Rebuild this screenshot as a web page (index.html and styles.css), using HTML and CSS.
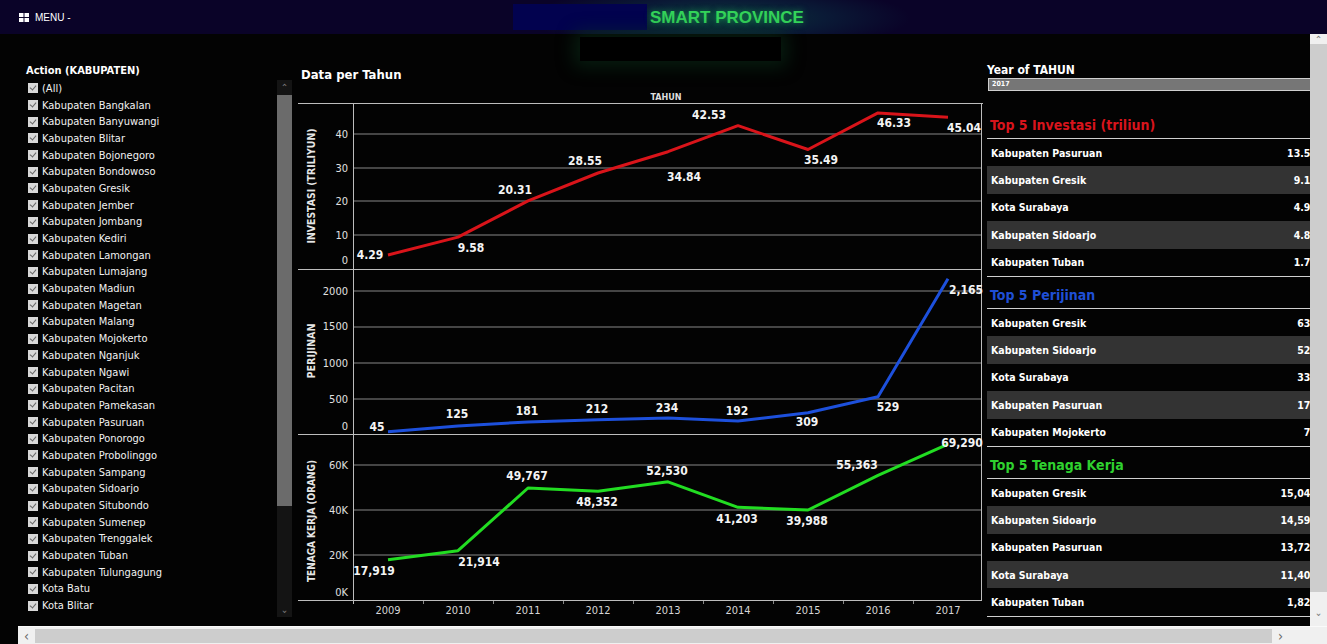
FILE: index.html
```html
<!DOCTYPE html>
<html lang="id">
<head>
  <meta charset="UTF-8">
  <title>Smart Province - Data per Tahun</title>
  <link rel="stylesheet" href="styles.css">
</head>
<body>

  <header class="topbar">
    <div class="menu">
      <svg class="menu-icon" width="10" height="9" viewBox="0 0 10 9">
        <rect x="0" y="0" width="4.5" height="4" fill="#fff"/>
        <rect x="5.5" y="0" width="4.5" height="4" fill="#fff"/>
        <rect x="0" y="5" width="4.5" height="4" fill="#fff"/>
        <rect x="5.5" y="5" width="4.5" height="4" fill="#fff"/>
      </svg>
      <span>MENU -</span>
    </div>
    <div class="brand">
      <span class="brand-logo"></span>
      <span class="brand-name">SMART PROVINCE</span>
    </div>
    <div class="subtitle-box"></div>
  </header>

  <div class="viewport">
    <div class="page">

      <!-- filter kabupaten -->
      <aside class="filter">
        <div class="filter-title">Action (KABUPATEN)</div>
        <div class="filter-box">
          <ul class="filter-list">
            <li><i class="cb"></i>(All)</li>
            <li><i class="cb"></i>Kabupaten Bangkalan</li>
            <li><i class="cb"></i>Kabupaten Banyuwangi</li>
            <li><i class="cb"></i>Kabupaten Blitar</li>
            <li><i class="cb"></i>Kabupaten Bojonegoro</li>
            <li><i class="cb"></i>Kabupaten Bondowoso</li>
            <li><i class="cb"></i>Kabupaten Gresik</li>
            <li><i class="cb"></i>Kabupaten Jember</li>
            <li><i class="cb"></i>Kabupaten Jombang</li>
            <li><i class="cb"></i>Kabupaten Kediri</li>
            <li><i class="cb"></i>Kabupaten Lamongan</li>
            <li><i class="cb"></i>Kabupaten Lumajang</li>
            <li><i class="cb"></i>Kabupaten Madiun</li>
            <li><i class="cb"></i>Kabupaten Magetan</li>
            <li><i class="cb"></i>Kabupaten Malang</li>
            <li><i class="cb"></i>Kabupaten Mojokerto</li>
            <li><i class="cb"></i>Kabupaten Nganjuk</li>
            <li><i class="cb"></i>Kabupaten Ngawi</li>
            <li><i class="cb"></i>Kabupaten Pacitan</li>
            <li><i class="cb"></i>Kabupaten Pamekasan</li>
            <li><i class="cb"></i>Kabupaten Pasuruan</li>
            <li><i class="cb"></i>Kabupaten Ponorogo</li>
            <li><i class="cb"></i>Kabupaten Probolinggo</li>
            <li><i class="cb"></i>Kabupaten Sampang</li>
            <li><i class="cb"></i>Kabupaten Sidoarjo</li>
            <li><i class="cb"></i>Kabupaten Situbondo</li>
            <li><i class="cb"></i>Kabupaten Sumenep</li>
            <li><i class="cb"></i>Kabupaten Trenggalek</li>
            <li><i class="cb"></i>Kabupaten Tuban</li>
            <li><i class="cb"></i>Kabupaten Tulungagung</li>
            <li><i class="cb"></i>Kota Batu</li>
            <li><i class="cb"></i>Kota Blitar</li>
            <li><i class="cb"></i>Kota Kediri</li>
          </ul>
          <div class="list-scroll">
            <span class="arr">&#8963;</span>
            <span class="list-thumb"></span>
            <span class="arr down">&#8964;</span>
          </div>
        </div>
      </aside>

      <!-- grafik per tahun -->
      <section class="chart-col">
        <div class="chart-title">Data per Tahun</div>
        <svg class="chart" viewBox="296 83 689 539" width="689" height="539">
          <text x="666" y="100" class="head">TAHUN</text>

          <!-- grid -->
          <g class="grid">
            <line x1="353" y1="134" x2="982" y2="134"/>
            <line x1="353" y1="168" x2="982" y2="168"/>
            <line x1="353" y1="201" x2="982" y2="201"/>
            <line x1="353" y1="235" x2="982" y2="235"/>
            <line x1="353" y1="291" x2="982" y2="291"/>
            <line x1="353" y1="327" x2="982" y2="327"/>
            <line x1="353" y1="363" x2="982" y2="363"/>
            <line x1="353" y1="399" x2="982" y2="399"/>
            <line x1="353" y1="465" x2="982" y2="465"/>
            <line x1="353" y1="510" x2="982" y2="510"/>
            <line x1="353" y1="555" x2="982" y2="555"/>
          </g>

          <!-- frame -->
          <g class="frame">
            <line x1="298" y1="103.5" x2="983" y2="103.5"/>
            <line x1="298" y1="269.5" x2="982" y2="269.5"/>
            <line x1="298" y1="434.5" x2="982" y2="434.5"/>
            <line x1="298" y1="600.5" x2="982" y2="600.5"/>
            <line x1="353.5" y1="103" x2="353.5" y2="604"/>
            <line x1="981.5" y1="103" x2="981.5" y2="601"/>
          </g>
          <g class="xtick">
            <line x1="423.5" y1="601" x2="423.5" y2="604"/>
            <line x1="493.5" y1="601" x2="493.5" y2="604"/>
            <line x1="563.5" y1="601" x2="563.5" y2="604"/>
            <line x1="633.5" y1="601" x2="633.5" y2="604"/>
            <line x1="703.5" y1="601" x2="703.5" y2="604"/>
            <line x1="773.5" y1="601" x2="773.5" y2="604"/>
            <line x1="843.5" y1="601" x2="843.5" y2="604"/>
            <line x1="913.5" y1="601" x2="913.5" y2="604"/>
          </g>

          <!-- axis titles -->
          <g class="ytitle">
            <text transform="translate(315,186) rotate(-90)" textLength="115" lengthAdjust="spacingAndGlyphs">INVESTASI (TRILIYUN)</text>
            <text transform="translate(315,351) rotate(-90)" textLength="55" lengthAdjust="spacingAndGlyphs">PERIJINAN</text>
            <text transform="translate(315,521) rotate(-90)" textLength="122" lengthAdjust="spacingAndGlyphs">TENAGA KERJA (ORANG)</text>
          </g>

          <!-- y ticks -->
          <g class="ytick">
            <text x="348" y="138">40</text>
            <text x="348" y="172">30</text>
            <text x="348" y="205">20</text>
            <text x="348" y="239">10</text>
            <text x="348" y="264">0</text>
            <text x="348" y="295">2000</text>
            <text x="348" y="330">1500</text>
            <text x="348" y="367">1000</text>
            <text x="348" y="403">500</text>
            <text x="348" y="430">0</text>
            <text x="348" y="469">60K</text>
            <text x="348" y="514">40K</text>
            <text x="348" y="559">20K</text>
            <text x="348" y="596">0K</text>
          </g>

          <!-- x labels -->
          <g class="xlabel">
            <text x="388" y="614">2009</text>
            <text x="458" y="614">2010</text>
            <text x="528" y="614">2011</text>
            <text x="598" y="614">2012</text>
            <text x="668" y="614">2013</text>
            <text x="738" y="614">2014</text>
            <text x="808" y="614">2015</text>
            <text x="878" y="614">2016</text>
            <text x="948" y="614">2017</text>
          </g>

          <!-- series -->
          <polyline class="line red" points="388,255 458,237.1 528,200.9 598,173 668,151.7 738,125.7 808,149.5 878,112.9 948,117.3"/>
          <polyline class="line blue" points="388,431.8 458,426 528,421.9 598,419.7 668,418.1 738,421.1 808,412.7 878,396.8 948,278.7"/>
          <polyline class="line green" points="388,559.7 458,550.7 528,488 598,491.2 668,481.8 738,507.3 808,510 878,475.4 948,444.1"/>

          <g class="val">
            <text x="370" y="259">4.29</text>
            <text x="471" y="252">9.58</text>
            <text x="515" y="194">20.31</text>
            <text x="585" y="165">28.55</text>
            <text x="684" y="181">34.84</text>
            <text x="709" y="119">42.53</text>
            <text x="821" y="164">35.49</text>
            <text x="894" y="127">46.33</text>
            <text x="964" y="132">45.04</text>

            <text x="377" y="431">45</text>
            <text x="457" y="418">125</text>
            <text x="527" y="415">181</text>
            <text x="597" y="413">212</text>
            <text x="667" y="412">234</text>
            <text x="737" y="415">192</text>
            <text x="807" y="426">309</text>
            <text x="888" y="411">529</text>
            <text x="966" y="294">2,165</text>

            <text x="374" y="575">17,919</text>
            <text x="479" y="566">21,914</text>
            <text x="527" y="480">49,767</text>
            <text x="597" y="506">48,352</text>
            <text x="667" y="475">52,530</text>
            <text x="737" y="523">41,203</text>
            <text x="807" y="525">39,988</text>
            <text x="857" y="469">55,363</text>
            <text x="962" y="447">69,290</text>
          </g>
        </svg>
      </section>

      <!-- top 5 tables -->
      <aside class="tops">
        <div class="year-title">Year of TAHUN</div>
        <div class="year-select">2017</div>

        <div class="sect first">
          <div class="sect-title red">Top 5 Investasi (triliun)</div>
          <div class="row"><span>Kabupaten Pasuruan</span><b>13.55</b></div>
          <div class="row alt"><span>Kabupaten Gresik</span><b>9.15</b></div>
          <div class="row"><span>Kota Surabaya</span><b>4.95</b></div>
          <div class="row alt"><span>Kabupaten Sidoarjo</span><b>4.85</b></div>
          <div class="row"><span>Kabupaten Tuban</span><b>1.75</b></div>
        </div>

        <div class="sect">
          <div class="sect-title blue">Top 5 Perijinan</div>
          <div class="row"><span>Kabupaten Gresik</span><b>638</b></div>
          <div class="row alt"><span>Kabupaten Sidoarjo</span><b>527</b></div>
          <div class="row"><span>Kota Surabaya</span><b>335</b></div>
          <div class="row alt"><span>Kabupaten Pasuruan</span><b>178</b></div>
          <div class="row"><span>Kabupaten Mojokerto</span><b>78</b></div>
        </div>

        <div class="sect">
          <div class="sect-title green">Top 5 Tenaga Kerja</div>
          <div class="row"><span>Kabupaten Gresik</span><b>15,043</b></div>
          <div class="row alt"><span>Kabupaten Sidoarjo</span><b>14,596</b></div>
          <div class="row"><span>Kabupaten Pasuruan</span><b>13,724</b></div>
          <div class="row alt"><span>Kota Surabaya</span><b>11,402</b></div>
          <div class="row"><span>Kabupaten Tuban</span><b>1,825</b></div>
        </div>
      </aside>
    </div>

    <div class="vscroll">
      <span class="arr">&#8963;</span>
      <span class="vthumb"></span>
      <span class="arr">&#8964;</span>
    </div>
  </div>

  <div class="hscroll">
    <span class="arr">&lsaquo;</span>
    <span class="hthumb"></span>
    <span class="arr">&rsaquo;</span>
    <span class="corner"></span>
  </div>

</body>
</html>
```

FILE: styles.css
```css
* {
  box-sizing: border-box;
}
body {
  margin: 0;
  background: #030303;
  color: #eee;
  font-family: 'DejaVu Sans Condensed', 'DejaVu Sans', sans-serif;
  width: 1327px;
  height: 644px;
  overflow: hidden;
}

/* Header */
.topbar {
  position: relative;
  height: 34px;
  display: flex;
  align-items: center;
  background: radial-gradient(ellipse 190px 34px at 720px 18px, #0b3b3c 0%, #0a1a36 55%, #0a0328 100%);
  background-color: #0a0328;
}
.menu {
  width: 513px;
  padding-left: 19px;
  display: flex;
  align-items: center;
  gap: 6px;
  font-family: 'Liberation Sans', Arial, sans-serif;
  font-size: 10px;
  color: #fff;
}
.brand {
  display: flex;
  align-items: center;
  height: 34px;
}
.brand-logo {
  width: 134px;
  height: 26px;
  background: #02024f;
}
.brand-name {
  margin: 2px 0 0 3px;
  font-family: 'Liberation Sans', Arial, sans-serif;
  font-weight: bold;
  font-size: 17px;
  color: #34d45a;
  text-shadow: 0 0 6px rgba(40, 220, 100, 0.55);
}
.subtitle-box {
  position: absolute;
  left: 580px;
  top: 37px;
  width: 201px;
  height: 24px;
  background: #000;
  box-shadow: 0 0 18px 6px rgba(10, 60, 30, 0.45);
  z-index: 2;
}

/* Layout */
.viewport {
  display: flex;
  height: 592px;
}
.page {
  display: flex;
  width: 1310px;
  overflow: hidden;
}

/* Filter panel */
.filter {
  width: 296px;
  flex: none;
  padding-left: 26px;
}
.filter-title {
  margin-top: 30px;
  height: 14px;
  line-height: 14px;
  font-size: 11px;
  font-weight: bold;
  color: #fff;
}
.filter-box {
  display: flex;
  margin-top: 2px;
  height: 537px;
  overflow: hidden;
}
.filter-list {
  list-style: none;
  margin: 0;
  padding: 0 0 0 2px;
  width: 251px;
}
.filter-list li {
  height: 16.7px;
  display: flex;
  align-items: center;
  font-size: 11px;
  color: #f2f2f2;
  white-space: nowrap;
}
.cb {
  width: 10px;
  height: 10px;
  margin-right: 4px;
  flex: none;
  background: #d8d8d8;
  position: relative;
}
.cb::after {
  content: "";
  position: absolute;
  left: 3px;
  top: 1px;
  width: 3px;
  height: 5px;
  border: solid #666;
  border-width: 0 1.5px 1.5px 0;
  transform: rotate(40deg);
}
.list-scroll {
  width: 15px;
  flex: none;
  display: flex;
  flex-direction: column;
  align-items: center;
  background: #141414;
  color: #777;
  font-size: 10px;
}
.list-scroll .arr {
  height: 15px;
  line-height: 15px;
}
.list-thumb {
  width: 15px;
  height: 411px;
  background: #6b6b6b;
}
.list-scroll .down {
  margin-top: auto;
}

/* Chart column */
.chart-col {
  width: 689px;
  flex: none;
}
.chart-title {
  margin: 33px 0 0 5px;
  height: 16px;
  line-height: 16px;
  font-size: 13px;
  font-weight: bold;
  color: #fff;
}
.chart {
  display: block;
  font-family: 'DejaVu Sans Condensed', 'DejaVu Sans', sans-serif;
}
.chart .head {
  font-size: 9px;
  font-weight: bold;
  fill: #ddd;
  text-anchor: middle;
}
.chart .grid line {
  stroke: #5c5c5c;
  stroke-width: 1.5;
}
.chart .frame line {
  stroke: #bdbdbd;
  stroke-width: 1;
}
.chart .xtick line {
  stroke: #888;
}
.chart .ytitle text {
  font-size: 10px;
  font-weight: bold;
  fill: #e6e6e6;
  text-anchor: middle;
}
.chart .ytick text {
  font-size: 11px;
  fill: #e0e0e0;
  text-anchor: end;
}
.chart .xlabel text {
  font-size: 11px;
  fill: #d6d6d6;
  text-anchor: middle;
}
.chart .line {
  fill: none;
  stroke-width: 3;
  stroke-linejoin: round;
}
.chart .red { stroke: #d9141a; }
.chart .blue { stroke: #1d50dc; }
.chart .green { stroke: #22dd22; }
.chart .val text {
  font-size: 12px;
  font-weight: bold;
  fill: #f4f4f4;
  text-anchor: middle;
}

/* Top 5 panel */
.tops {
  width: 325px;
  flex: none;
  padding-left: 2px;
  overflow: hidden;
}
.year-title {
  margin-top: 29px;
  height: 14px;
  line-height: 14px;
  font-size: 12px;
  font-weight: bold;
  color: #fff;
}
.year-select {
  margin: 1px 0 0 1px;
  width: 340px;
  height: 13px;
  line-height: 11px;
  padding-left: 3px;
  background: #767676;
  border: 1px solid #cfcfcf;
  font-size: 7px;
  font-weight: bold;
  color: #fff;
}
.sect {
  width: 331px;
  border-bottom: 1px solid #cfcfcf;
}
.sect.first {
  margin-top: 16px;
}
.sect-title {
  height: 32px;
  border-bottom: 1px solid #cfcfcf;
  display: flex;
  align-items: flex-end;
  padding: 0 0 5px 3px;
  font-size: 14px;
  font-weight: bold;
}
.sect-title.red { color: #d8141c; }
.sect-title.blue { color: #1f4fd6; }
.sect-title.green { color: #2fd12f; }
.row {
  height: 27.4px;
  display: flex;
  align-items: center;
  justify-content: space-between;
  padding: 0 1px 0 4px;
  font-size: 10.5px;
  font-weight: bold;
  color: #fff;
}
.row.alt {
  background: #333;
}
.row b {
  font-weight: bold;
}

/* Scrollbars */
.vscroll {
  width: 17px;
  flex: none;
  display: flex;
  flex-direction: column;
  align-items: center;
  background: #f0f0f0;
  color: #7a7a7a;
  font-size: 10px;
}
.vscroll .arr {
  height: 10px;
  line-height: 12px;
}
.vthumb {
  width: 17px;
  height: 548px;
  background: #cdcdcd;
}
.vscroll .arr:last-child {
  margin-top: auto;
  height: 24px;
  line-height: 22px;
}
.hscroll {
  display: flex;
  align-items: center;
  margin-left: 18px;
  height: 18px;
  background: #f0f0f0;
  border-top: 1px solid #fafafa;
  color: #666;
  font-size: 14px;
}
.hscroll .arr {
  width: 17px;
  text-align: center;
  line-height: 16px;
}
.hthumb {
  width: 1237px;
  height: 14px;
  background: #cdcdcd;
}
.hscroll .arr:nth-of-type(2) {
  margin-left: auto;
  margin-right: 4px;
}
.corner {
  width: 17px;
  height: 18px;
  background: #f0f0f0;
}
```
